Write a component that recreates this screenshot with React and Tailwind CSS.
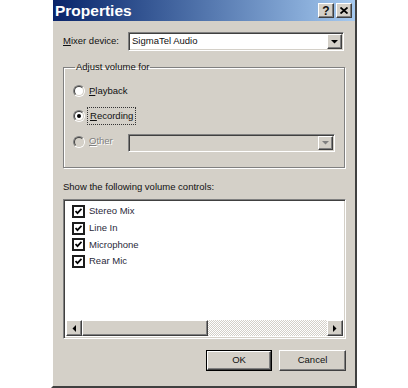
import React from 'react';

const raised = 'border border-t-white border-l-white border-r-[#404040] border-b-[#404040] shadow-[inset_-1px_-1px_0_#808080]';
const sunken = 'border border-t-[#808080] border-l-[#808080] border-r-white border-b-white shadow-[inset_1px_1px_0_#404040,inset_-1px_-1px_0_#d4d0c8]';

const Arrow = ({ dir = 'down', color = '#000' }) => {
    const pts = {
        down: '0,0 7,0 3.5,3.5',
        left: '4,0 4,7 0.5,3.5',
        right: '0,0 0,7 3.5,3.5',
    }[dir];
    const w = dir === 'down' ? 7 : 4;
    const h = dir === 'down' ? 4 : 7;
    return (
        <svg width={w} height={h} viewBox={`0 0 ${w} ${h}`}>
            <polygon points={pts} fill={color} />
        </svg>
    );
};

const Radio = ({ checked, disabled }) => (
    <div className="w-[12px] h-[12px] rounded-full border border-t-[#808080] border-l-[#808080] border-r-white border-b-white shrink-0">
        <div className={`w-full h-full rounded-full border border-t-[#404040] border-l-[#404040] border-r-[#d4d0c8] border-b-[#d4d0c8] flex items-center justify-center ${disabled ? 'bg-[#d4d0c8]' : 'bg-white'}`}>
            {checked && <div className="w-[4px] h-[4px] rounded-full bg-black" />}
        </div>
    </div>
);

const Check = () => (
    <div className="w-[13px] h-[13px] border-2 border-[#1c1c1c] bg-white flex items-center justify-center shrink-0">
        <svg width="7" height="7" viewBox="0 0 7 7">
            <polyline points="0.5,3 2.5,5.2 6.5,0.8" fill="none" stroke="#000" strokeWidth="1.8" />
        </svg>
    </div>
);

const Key = ({ children }) => <span className="underline underline-offset-[1px]">{children}</span>;

const items = ['Stereo Mix', 'Line In', 'Microphone', 'Rear Mic'];

export default function App() {
    return (
        <div className="w-[408px] h-[388px] bg-white flex text-[9.5px] text-[#111] font-['Liberation_Sans',Arial,sans-serif]">
            <div className="ml-[51px] w-[306px] h-[388px] flex flex-col bg-[#d4d0c8] border-l-2 border-r-2 border-b-2 border-l-white border-r-[#404040] border-b-[#404040]">
                {/* title bar */}
                <div className="h-[21px] flex items-center pl-[2px] pr-[3px] bg-linear-to-r from-[#0a246a] to-[#a6caf0]">
                    <span className="text-white font-bold text-[15.5px] leading-none">Properties</span>
                    <div className="ml-auto flex gap-[2px]">
                        <div className={`w-[16px] h-[15px] bg-[#d4d0c8] flex items-center justify-center font-bold text-[12px] leading-none ${raised}`}>?</div>
                        <div className={`w-[16px] h-[15px] bg-[#d4d0c8] flex items-center justify-center ${raised}`}>
                            <svg width="8" height="7" viewBox="0 0 8 7">
                                <path d="M0.5 0.5 L7.5 6.5 M7.5 0.5 L0.5 6.5" stroke="#000" strokeWidth="1.8" />
                            </svg>
                        </div>
                    </div>
                </div>

                <div className="flex flex-col pl-[10px] pr-[9px]">
                    {/* mixer device */}
                    <div className="mt-[11px] flex items-center h-[19px]">
                        <span className="w-[65px]"><Key>M</Key>ixer device:</span>
                        <div className={`w-[216px] h-[19px] bg-white flex items-center pl-[3px] pr-[1px] ${sunken}`}>
                            <span>SigmaTel Audio</span>
                            <div className={`ml-auto w-[15px] h-[15px] bg-[#d4d0c8] flex items-center justify-center ${raised}`}>
                                <Arrow />
                            </div>
                        </div>
                    </div>

                    {/* adjust volume group */}
                    <fieldset className="mt-[10px] mr-[1px] h-[107px] border border-[#808080] shadow-[1px_1px_0_#fff,inset_1px_1px_0_#fff] pl-[9px] pr-[9px]">
                        <legend className="ml-[2px] px-[1px] leading-[12px]">Adjust volume for</legend>
                        <div className="mt-[10px] flex items-center gap-[4px] h-[16px]">
                            <Radio />
                            <span><Key>P</Key>layback</span>
                        </div>
                        <div className="mt-[9px] flex items-center gap-[4px] h-[16px]">
                            <Radio checked />
                            <span className="outline-1 outline-dotted outline-[#333] outline-offset-[1px] px-[1px]"><Key>R</Key>ecording</span>
                        </div>
                        <div className="mt-[10px] flex items-center h-[18px]">
                            <div className="flex items-center gap-[4px] w-[55px] -mt-[3px]">
                                <Radio disabled />
                                <span className="text-[#808080] [text-shadow:1px_1px_0_#fff]"><Key>O</Key>ther</span>
                            </div>
                            <div className={`w-[207px] h-[18px] bg-[#d4d0c8] flex items-center pr-[1px] ${sunken}`}>
                                <div className={`ml-auto w-[15px] h-[14px] bg-[#d4d0c8] flex items-center justify-center ${raised}`}>
                                    <Arrow color="#808080" />
                                </div>
                            </div>
                        </div>
                    </fieldset>

                    <div className="mt-[13px] h-[12px] leading-[12px]">Show the following volume controls:</div>

                    {/* list */}
                    <div className={`mt-[6px] h-[140px] bg-white flex flex-col p-[2px] ${sunken}`}>
                        <div className="flex flex-col pt-[1px] pl-[6px]">
                            {items.map(item => (
                                <div key={item} className="h-[16.7px] flex items-center gap-[4px]">
                                    <Check />
                                    <span className="text-[#2a2a3a]">{item}</span>
                                </div>
                            ))}
                        </div>
                        {/* horizontal scrollbar */}
                        <div className="mt-auto h-[16px] flex">
                            <div className={`w-[16px] h-[16px] bg-[#d4d0c8] flex items-center justify-center ${raised}`}>
                                <Arrow dir="left" />
                            </div>
                            <div className={`w-[126px] h-[16px] bg-[#d4d0c8] ${raised}`} />
                            <div className="flex-1 h-[16px] bg-[repeating-conic-gradient(#d4d0c8_0_25%,#ffffff_0_50%)] bg-[length:2px_2px]" />
                            <div className={`w-[16px] h-[16px] bg-[#d4d0c8] flex items-center justify-center ${raised}`}>
                                <Arrow dir="right" />
                            </div>
                        </div>
                    </div>

                    {/* buttons */}
                    <div className="mt-[11px] flex justify-end gap-[7px]">
                        <div className="w-[66px] h-[21px] border border-black">
                            <div className={`w-full h-full bg-[#d4d0c8] flex items-center justify-center ${raised}`}>OK</div>
                        </div>
                        <div className={`w-[67px] h-[21px] bg-[#d4d0c8] flex items-center justify-center ${raised}`}>Cancel</div>
                    </div>
                </div>
            </div>
        </div>
    );
}
